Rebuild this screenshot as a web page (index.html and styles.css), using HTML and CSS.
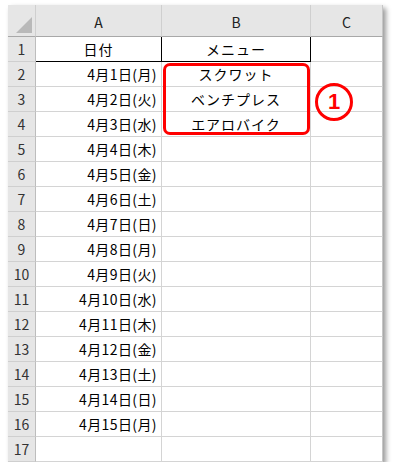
FILE: index.html
```html
<!DOCTYPE html>
<html lang="ja">
<head>
<meta charset="utf-8">
<link rel="stylesheet" href="styles.css">
</head>
<body>
<div class="sheet">
  <div class="grid">
    <div class="corner"><svg class="tri" width="16" height="16" viewBox="0 0 16 16"><polygon points="16,0 16,16 0,16" fill="#b9b9b9"/></svg></div>
    <div class="colh">A</div>
    <div class="colh">B</div>
    <div class="colh last">C</div>

    <div class="rowh">1</div><div class="cell c hdr">日付</div><div class="cell c hdr">メニュー</div><div class="cell last"></div>
    <div class="rowh">2</div><div class="cell r">4月1日(月)</div><div class="cell c">スクワット</div><div class="cell last"></div>
    <div class="rowh">3</div><div class="cell r">4月2日(火)</div><div class="cell c">ベンチプレス</div><div class="cell last"></div>
    <div class="rowh">4</div><div class="cell r">4月3日(水)</div><div class="cell c">エアロバイク</div><div class="cell last"></div>
    <div class="rowh">5</div><div class="cell r">4月4日(木)</div><div class="cell"></div><div class="cell last"></div>
    <div class="rowh">6</div><div class="cell r">4月5日(金)</div><div class="cell"></div><div class="cell last"></div>
    <div class="rowh">7</div><div class="cell r">4月6日(土)</div><div class="cell"></div><div class="cell last"></div>
    <div class="rowh">8</div><div class="cell r">4月7日(日)</div><div class="cell"></div><div class="cell last"></div>
    <div class="rowh">9</div><div class="cell r">4月8日(月)</div><div class="cell"></div><div class="cell last"></div>
    <div class="rowh">10</div><div class="cell r">4月9日(火)</div><div class="cell"></div><div class="cell last"></div>
    <div class="rowh">11</div><div class="cell r">4月10日(水)</div><div class="cell"></div><div class="cell last"></div>
    <div class="rowh">12</div><div class="cell r">4月11日(木)</div><div class="cell"></div><div class="cell last"></div>
    <div class="rowh">13</div><div class="cell r">4月12日(金)</div><div class="cell"></div><div class="cell last"></div>
    <div class="rowh">14</div><div class="cell r">4月13日(土)</div><div class="cell"></div><div class="cell last"></div>
    <div class="rowh">15</div><div class="cell r">4月14日(日)</div><div class="cell"></div><div class="cell last"></div>
    <div class="rowh">16</div><div class="cell r">4月15日(月)</div><div class="cell"></div><div class="cell last"></div>
    <div class="rowh">17</div><div class="cell"></div><div class="cell"></div><div class="cell last"></div>
  </div>
  <div class="redbox"></div>
  <div class="badge">1</div>
</div>
</body>
</html>
```
FILE: styles.css
```css
html, body {
  margin: 0;
  padding: 0;
  background: #fff;
}
body {
  font-family: "Noto Sans CJK JP", "Noto Sans", sans-serif;
  font-size: 14px;
  color: #000;
}
.sheet {
  position: relative;
  width: 375px;
  margin: 5px 0 0 8px;
  box-shadow: 3px 3px 5px rgba(0, 0, 0, 0.4);
  background: #fff;
}
.grid {
  display: grid;
  grid-template-columns: 28px 126px 149px 72px;
  grid-template-rows: 32px repeat(17, 25px);
}
.grid > div {
  box-sizing: border-box;
  display: flex;
  align-items: center;
  line-height: 1;
  white-space: nowrap;
}
.corner {
  background: #e6e6e6;
  border-right: 1px solid #cfcfcf;
  border-bottom: 1px solid #a8a8a8;
  justify-content: flex-end;
  align-items: flex-end !important;
}
.tri {
  display: block;
  margin: 0 3px 3px 0;
}
.colh {
  background: #e6e6e6;
  border-right: 1px solid #cfcfcf;
  border-bottom: 1px solid #a8a8a8;
  justify-content: center;
  color: #222;
  padding-top: 2px;
}
.colh.last {
  border-right: 1px solid #c6c6c6;
}
.rowh {
  background: #e6e6e6;
  border-right: 1px solid #bdbdbd;
  border-bottom: 1px solid #cfcfcf;
  justify-content: center;
  color: #333;
}
.cell {
  border-right: 1px solid #d4d4d4;
  border-bottom: 1px solid #d4d4d4;
}
.cell.last {
  border-right: 1px solid #c6c6c6;
}
.cell.c {
  justify-content: center;
  letter-spacing: 1px;
}
.cell.r {
  justify-content: flex-end;
  padding-right: 4px;
  letter-spacing: 0.4px;
}
.cell.hdr {
  border-right: 1px solid #000;
  border-bottom: 1px solid #000;
}
.redbox {
  position: absolute;
  left: 155px;
  top: 58px;
  width: 147px;
  height: 72px;
  box-sizing: border-box;
  border: 3px solid #f00;
  border-radius: 7px;
}
.badge {
  position: absolute;
  left: 307px;
  top: 78px;
  width: 38px;
  height: 38px;
  box-sizing: border-box;
  border: 3px solid #f00;
  border-radius: 50%;
  color: #f00;
  font-family: "Liberation Sans", Arial, sans-serif;
  font-weight: bold;
  font-size: 22px;
  display: flex;
  align-items: center;
  justify-content: center;
}
```
